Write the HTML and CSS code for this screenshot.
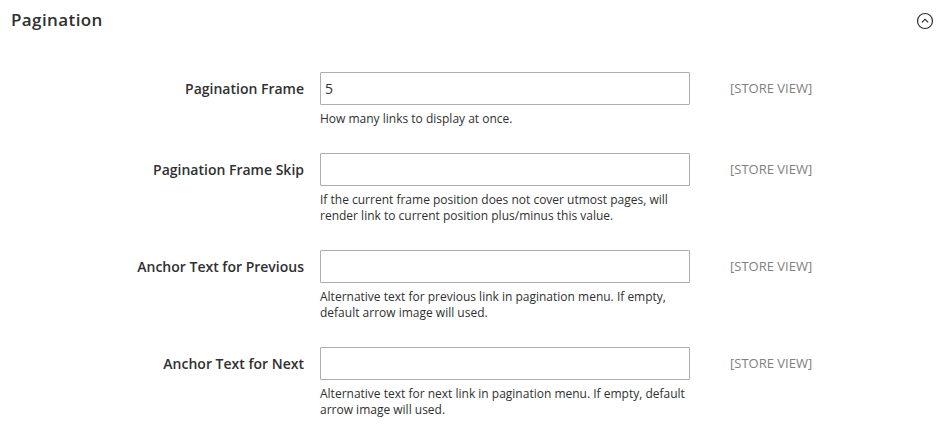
FILE: index.html
```html
<!DOCTYPE html>
<html>
<head>
<meta charset="utf-8">
<link rel="stylesheet" href="styles.css">
</head>
<body>
<section class="section">
  <div class="section-head">
    <h2 class="section-title">Pagination</h2>
    <svg class="toggle" width="18" height="18" viewBox="0 0 18 18"><circle cx="9" cy="9" r="7.5" fill="none" stroke="#303030" stroke-width="1.2"/><path d="M5.8 10.4 L9 7.4 L12.2 10.4" fill="none" stroke="#303030" stroke-width="1.2"/></svg>
  </div>
  <div class="rows">
    <div class="row">
      <label class="label">Pagination Frame</label>
      <div class="control">
        <input class="input" type="text" value="5">
        <p class="note">How many links to display at once.</p>
      </div>
      <span class="scope">[STORE VIEW]</span>
    </div>
    <div class="row">
      <label class="label">Pagination Frame Skip</label>
      <div class="control">
        <input class="input" type="text" value="">
        <p class="note">If the current frame position does not cover utmost pages, will render link to current position plus/minus this value.</p>
      </div>
      <span class="scope">[STORE VIEW]</span>
    </div>
    <div class="row">
      <label class="label">Anchor Text for Previous</label>
      <div class="control">
        <input class="input" type="text" value="">
        <p class="note">Alternative text for previous link in pagination menu. If empty, default arrow image will used.</p>
      </div>
      <span class="scope">[STORE VIEW]</span>
    </div>
    <div class="row">
      <label class="label">Anchor Text for Next</label>
      <div class="control">
        <input class="input" type="text" value="">
        <p class="note">Alternative text for next link in pagination menu. If empty, default arrow image will used.</p>
      </div>
      <span class="scope">[STORE VIEW]</span>
    </div>
  </div>
</section>
</body>
</html>
```
FILE: styles.css
```css
html, body {
  margin: 0;
  padding: 0;
  background: #ffffff;
}
body {
  font-family: "Open Sans", "Liberation Sans", sans-serif;
  color: #303030;
}
.section-head {
  display: flex;
  justify-content: space-between;
  align-items: center;
  padding: 8px 11px 0 11px;
  height: 24px;
}
.section-title {
  margin: 0;
  font-size: 17px;
  font-weight: 600;
  line-height: 24px;
  color: #303030;
  letter-spacing: 0.4px;
}
.toggle {
  display: block;
  margin-top: 1px;
}
.rows {
  margin-top: 40px;
}
.row {
  display: grid;
  grid-template-columns: 304px 370px auto;
  column-gap: 16px;
  margin-bottom: 26px;
}
.label {
  text-align: right;
  font-size: 14px;
  font-weight: 600;
  line-height: 33px;
  color: #303030;
}
.control {
  display: flex;
  flex-direction: column;
}
.input {
  box-sizing: border-box;
  width: 370px;
  height: 33px;
  margin: 0;
  border: 1px solid #adadad;
  border-radius: 1px;
  padding: 0 4px;
  font-family: "Open Sans", "Liberation Sans", sans-serif;
  font-size: 14px;
  color: #303030;
  outline: none;
}
.note {
  margin: 6px 0 0;
  font-size: 12px;
  line-height: 16px;
  color: #303030;
}
.scope {
  margin-left: 24px;
  font-size: 13px;
  line-height: 33px;
  color: #808080;
}
```
